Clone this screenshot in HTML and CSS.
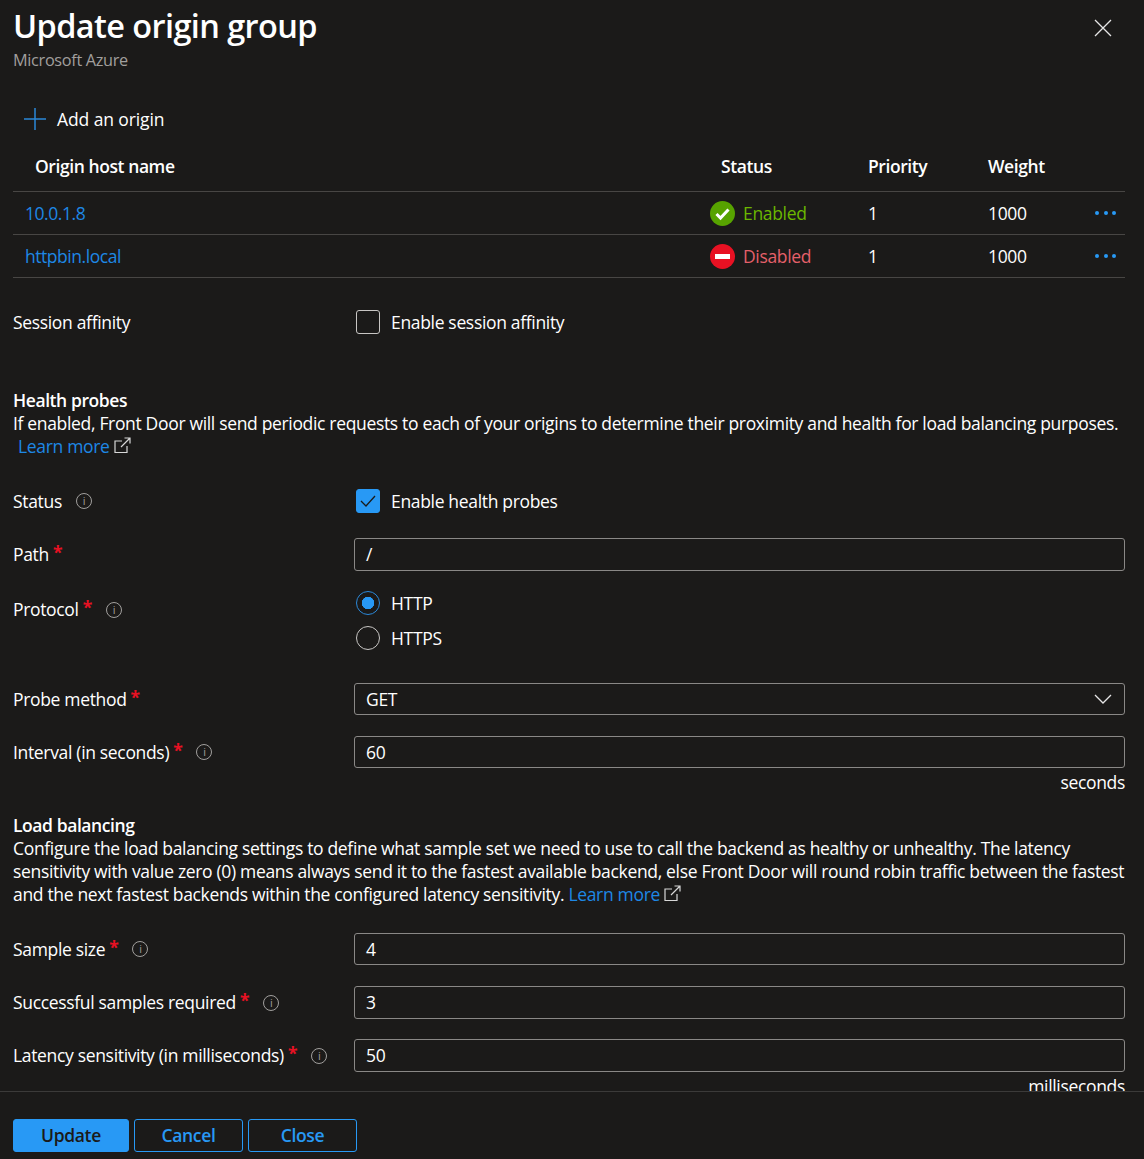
FILE: index.html
```html
<!DOCTYPE html>
<html>
<head>
    <meta charset="UTF-8">
    <title>Update origin group</title>
    <link rel="stylesheet" href="styles.css">
</head>
<body>
    <div class="scroll">
        <div class="head">
            <div>
                <h1>Update origin group</h1>
                <div class="sub">Microsoft Azure</div>
            </div>
            <svg class="close" width="18" height="18" viewBox="0 0 18 18"><path d="M1 1l16 16M17 1L1 17" stroke="#e6e6e6" stroke-width="1.3" fill="none"/></svg>
        </div>

        <div class="add">
            <svg width="22" height="22" viewBox="0 0 22 22"><path d="M11 0v22M0 11h22" stroke="#2b88d8" stroke-width="1.5" fill="none"/></svg>
            <span>Add an origin</span>
        </div>

        <div class="tbl thead">
            <div class="hostcol">Origin host name</div>
            <div class="statcol">Status</div>
            <div>Priority</div>
            <div>Weight</div>
            <div></div>
        </div>
        <div class="tbl trow">
            <a class="link">10.0.1.8</a>
            <div class="state on">
                <svg width="25" height="25" viewBox="0 0 25 25"><circle cx="12.5" cy="12.5" r="12.5" fill="#57a300"/><path d="M6.5 13l4 4 8-8.500" stroke="#fff" stroke-width="3" fill="none"/></svg>
                Enabled
            </div>
            <div>1</div>
            <div>1000</div>
            <div class="dots"><i></i><i></i><i></i></div>
        </div>
        <div class="tbl trow">
            <a class="link">httpbin.local</a>
            <div class="state off">
                <svg width="25" height="25" viewBox="0 0 25 25"><circle cx="12.500" cy="12.500" r="12.500" fill="#e81123"/><rect x="5" y="10" width="15" height="5" fill="#fff"/></svg>
                Disabled
            </div>
            <div>1</div>
            <div>1000</div>
            <div class="dots"><i></i><i></i><i></i></div>
        </div>

        <div class="row affinity">
            <div class="lbl">Session affinity</div>
            <label class="check"><span class="box"></span>Enable session affinity</label>
        </div>

        <div class="section s-health">
            <h2>Health probes</h2>
            <p>If enabled, Front Door will send periodic requests to each of your origins to determine their proximity and health for load balancing purposes.<br>
            <a class="link learn">Learn more</a>
            <svg class="ext" width="17" height="17" viewBox="0 0 17 17"><path d="M13 9v6.500H1V4h7M7 10L16 1M10.500 1H16v5.500" stroke="#d8d8d8" stroke-width="1.200" fill="none"/></svg></p>
        </div>

        <div class="row r-status">
            <div class="lbl">Status <span class="info">i</span></div>
            <label class="check"><span class="box checked"><svg width="16" height="12" viewBox="0 0 16 12"><path d="M1 6l5 5L15 1" stroke="#1b1a19" stroke-width="1.300" fill="none"/></svg></span>Enable health probes</label>
        </div>
        <div class="row r-path">
            <div class="lbl">Path <b>*</b></div>
            <div class="input">/</div>
        </div>
        <div class="row r-proto">
            <div class="lbl">Protocol <b>*</b> <span class="info">i</span></div>
            <div class="radios">
                <label class="radio"><span class="dot sel"></span>HTTP</label>
                <label class="radio"><span class="dot"></span>HTTPS</label>
            </div>
        </div>
        <div class="row r-method">
            <div class="lbl">Probe method <b>*</b></div>
            <div class="input short select">GET
                <svg width="18" height="11" viewBox="0 0 18 11"><path d="M1 1l8 8 8-8" stroke="#e6e6e6" stroke-width="1.300" fill="none"/></svg>
            </div>
        </div>
        <div class="row r-interval">
            <div class="lbl">Interval (in seconds) <b>*</b> <span class="info">i</span></div>
            <div class="input short">60</div>
        </div>
        <div class="unit">seconds</div>

        <div class="section s-load">
            <h2>Load balancing</h2>
            <p>Configure the load balancing settings to define what sample set we need to use to call the backend as healthy or unhealthy. The latency sensitivity with value zero (0) means always send it to the fastest available backend, else Front Door will round robin traffic between the fastest and the next fastest backends within the configured latency sensitivity. <a class="link">Learn more</a>
            <svg class="ext" width="17" height="17" viewBox="0 0 17 17"><path d="M13 9v6.500H1V4h7M7 10L16 1M10.500 1H16v5.500" stroke="#d8d8d8" stroke-width="1.200" fill="none"/></svg></p>
        </div>

        <div class="row r-sample">
            <div class="lbl">Sample size <b>*</b> <span class="info">i</span></div>
            <div class="input short">4</div>
        </div>
        <div class="row r-next">
            <div class="lbl">Successful samples required <b>*</b> <span class="info">i</span></div>
            <div class="input">3</div>
        </div>
        <div class="row r-last">
            <div class="lbl">Latency sensitivity (in milliseconds) <b>*</b> <span class="info">i</span></div>
            <div class="input">50</div>
        </div>
        <div class="unit">milliseconds</div>
    </div>

    <div class="foot">
        <button class="btn primary">Update</button>
        <button class="btn">Cancel</button>
        <button class="btn">Close</button>
    </div>
</body>
</html>
```

FILE: styles.css
```css
*{
    margin: 0;
    padding: 0;
    box-sizing: border-box;
}
html, body{
    height: 1159px;
    overflow: hidden;
}
body{
    background: #1b1a19;
    color: #fff;
    font-family: "Open Sans", "Noto Sans", sans-serif;
    font-size: 17.5px;
    letter-spacing: -0.33px;
    line-height: 23px;
}
.scroll{
    height: 1091px;
    overflow: hidden;
    padding: 0 19px 0 13px;
}
.head{
    display: flex;
    justify-content: space-between;
    height: 100px;
}
h1{
    font-size: 32.5px;
    font-weight: 600;
    letter-spacing: -0.6px;
    line-height: 40px;
    margin-top: 6px;
}
.sub{
    color: #a19f9d;
    font-size: 16.3px;
    line-height: 28px;
}
.close{
    margin: 19px 13px 0 0;
    width: 18px;
    height: 18px;
}
.add{
    display: flex;
    align-items: center;
    gap: 11px;
    height: 38px;
    padding-left: 11px;
    letter-spacing: -0.1px;
}
.tbl{
    display: grid;
    grid-template-columns: 697px 158px 120px 1fr 30px;
    align-items: center;
}
.thead{
    height: 54px;
    padding-top: 4px;
    font-weight: 600;
    letter-spacing: -0.42px;
    border-bottom: 1px solid #484644;
}
.hostcol{
    padding-left: 22px;
}
.statcol{
    padding-left: 11px;
}
.trow{
    height: 43px;
    border-bottom: 1px solid #484644;
}
.trow a{
    padding-left: 12px;
    letter-spacing: -0.45px;
}
.link{
    color: #1e88e5;
}
.state{
    display: flex;
    align-items: center;
    gap: 8px;
}
.on{
    color: #6bb700;
}
.off{
    color: #e5606a;
}
.dots{
    display: flex;
    gap: 4.500px;
}
.dots i{
    width: 4px;
    height: 4px;
    border-radius: 50%;
    background: #2899f5;
}
.row{
    display: grid;
    grid-template-columns: 341px 1fr;
    align-items: center;
}
.lbl{
    display: flex;
    align-items: center;
    gap: 4px;
}
.lbl b{
    color: #e81123;
    font-weight: 700;
    margin-top: -4px;
}
.info{
    width: 16px;
    height: 16px;
    margin-left: 10px;
    border: 1px solid #a19f9d;
    border-radius: 50%;
    color: #a19f9d;
    font-size: 11px;
    line-height: 14px;
    text-align: center;
}
.check, .radio{
    display: flex;
    align-items: center;
    gap: 11px;
    padding-left: 2px;
}
.box{
    display: flex;
    align-items: center;
    justify-content: center;
    width: 24px;
    height: 24px;
    border: 1px solid #c8c6c4;
    border-radius: 3px;
}
.checked{
    background: #2899f5;
    border-color: #2899f5;
}
.affinity{
    margin-top: 32px;
}
.section p{
    line-height: 23px;
}
h2{
    font-size: 17.500px;
    font-weight: 600;
    letter-spacing: -0.42px;
    line-height: 23px;
}
.learn{
    margin-left: 5px;
}
.ext{
    vertical-align: -1px;
}
.s-health{
    margin-top: 55px;
}
.r-status{
    margin-top: 31px;
}
.input{
    height: 33px;
    border: 1px solid #8a8886;
    border-radius: 3px;
    padding-left: 11px;
    line-height: 30px;
}
.short{
    height: 32px;
}
.r-path{
    margin-top: 25px;
}
.r-proto{
    margin-top: 20px;
    align-items: start;
}
.r-proto .lbl{
    margin-top: 7px;
}
.radios{
    display: flex;
    flex-direction: column;
    gap: 11px;
}
.dot{
    width: 24px;
    height: 24px;
    border: 1.5px solid #c8c6c4;
    border-radius: 50%;
}
.dot.sel{
    border-color: #2b88d8;
    background: radial-gradient(circle, #2899f5 0 6px, transparent 6.500px);
}
.r-method{
    margin-top: 33px;
}
.select{
    display: flex;
    justify-content: space-between;
    align-items: center;
    padding-right: 12px;
}
.r-interval{
    margin-top: 21px;
}
.unit{
    text-align: right;
    line-height: 23px;
    margin-top: 3px;
}
.s-load{
    margin-top: 20px;
}
.r-sample{
    margin-top: 27px;
}
.r-next{
    margin-top: 21px;
}
.r-last{
    margin-top: 20px;
}
.foot{
    height: 68px;
    border-top: 1px solid #3b3a39;
    padding: 27px 0 0 13px;
    display: flex;
    gap: 5px;
    align-items: flex-start;
}
.btn{
    width: 109px;
    height: 33px;
    padding-bottom: 2px;
    background: transparent;
    border: 1px solid #2899f5;
    border-radius: 3px;
    color: #2899f5;
    font: 600 17.500px "Open Sans", "Noto Sans", sans-serif;
    letter-spacing: -0.35px;
}
.primary{
    width: 116px;
    background: #2899f5;
    color: #1b1a19;
}
```
